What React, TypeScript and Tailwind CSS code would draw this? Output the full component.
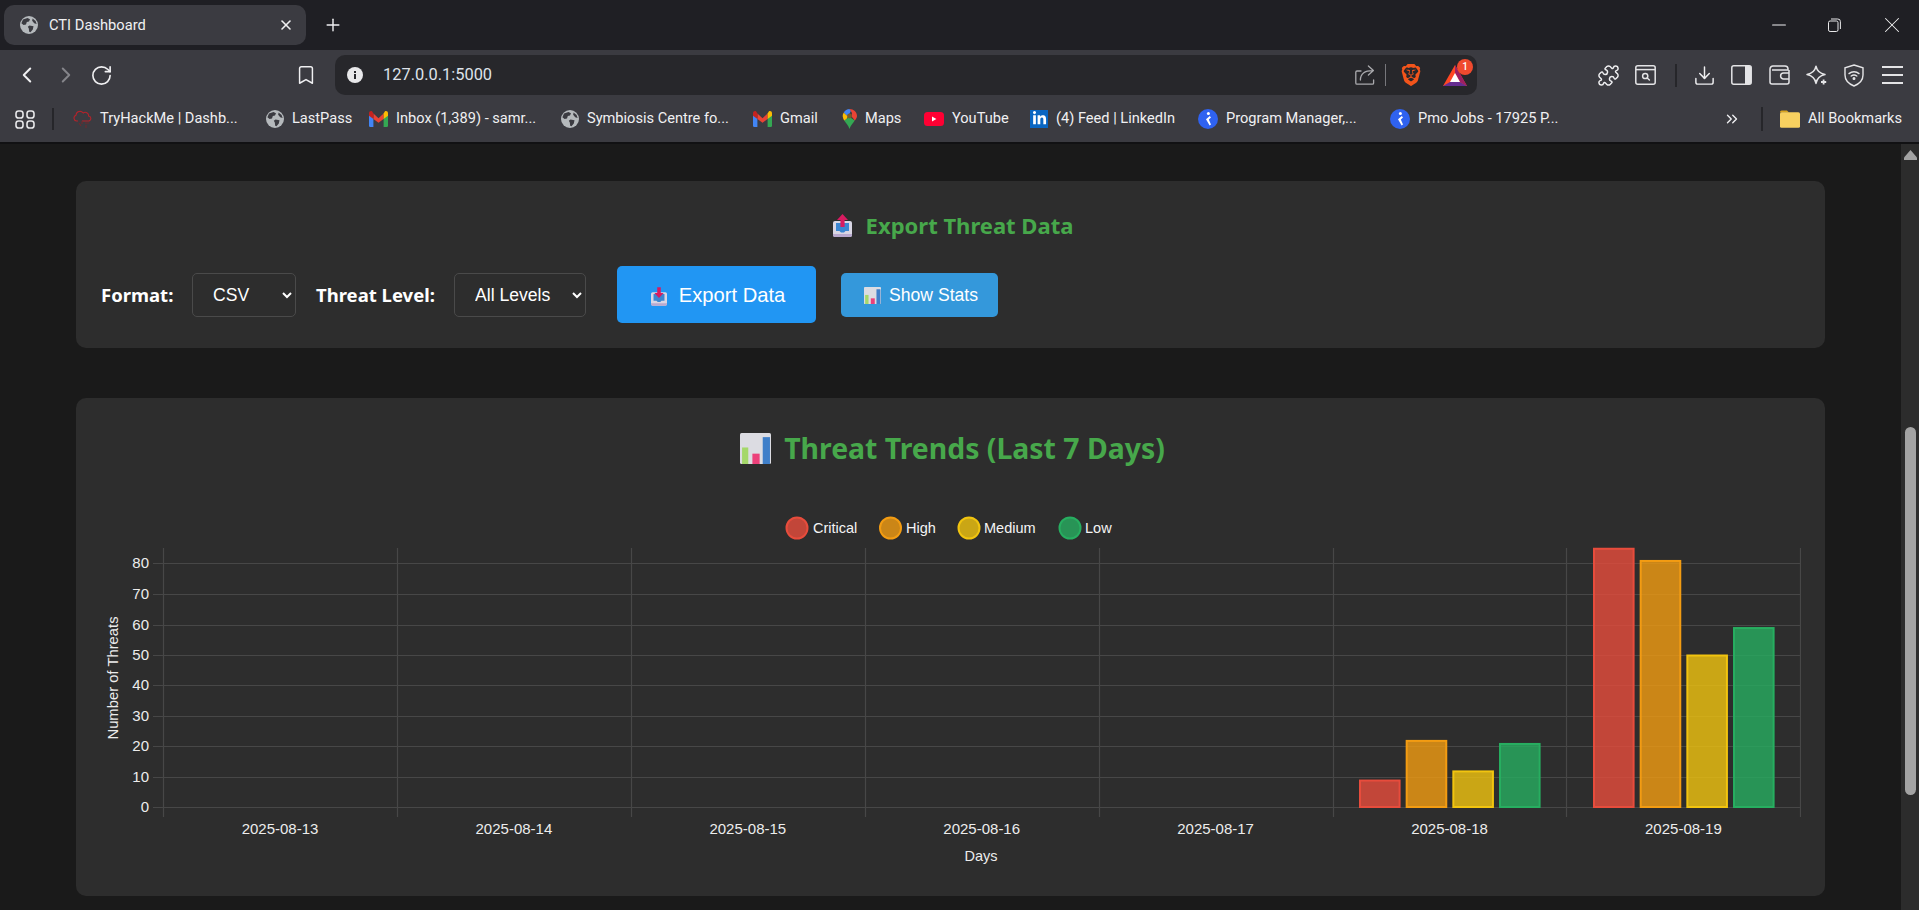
import React from 'react';
import {
  ChevronLeft,
  ChevronRight,
  ChevronsRight,
  Bookmark,
  Download,
  Minus,
  Plus,
  Puzzle,
  RotateCw,
  X,
} from 'lucide-react';
import { FaLinkedinIn } from 'react-icons/fa';
import { SiBrave } from 'react-icons/si';

function Globe({ size = 18 }: { size?: number }) {
  return (
    <svg width={size} height={size} viewBox="0 0 18 18">
      <circle cx="9" cy="9" r="9" fill="#b5b9bc" />
      <path d="M3 3.5 7.5 2 10 3.2 9 5.5 6.8 6 6 8.5 3.6 9 1.4 7.2Z" fill="#3b3b41" />
      <path d="M9.5 9.5 13.5 10.2 12.8 13.5 10.5 16.3 9.2 15.8 8.8 12.4 7.8 10.8Z" fill="#3b3b41" />
      <path d="M12.6 2.6 15.6 5 16.6 8 14.2 7.2 12.2 4.8Z" fill="#3b3b41" />
    </svg>
  );
}

function TryHackMe() {
  return (
    <svg width="19" height="20" viewBox="0 0 19 20" fill="none" stroke="#b3232b" strokeWidth="1.1">
      <path d="M5 12H3.6A3 3 0 0 1 3 6.2 4 4 0 0 1 10.2 4 3.4 3.4 0 0 1 15.6 7a2.6 2.6 0 0 1 .6 5H9" />
      <path d="M9 12v3M12 14h4M6 14l2 3M13 16v3" stroke="#6f2a2e" />
    </svg>
  );
}

function Gmail() {
  return (
    <svg width="19" height="16" viewBox="0 0 19 16">
      <path d="M0 2.2V14.6A1.3 1.3 0 0 0 1.3 16H4.4V7Z" fill="#4285f4" />
      <path d="M19 2.2V14.6A1.3 1.3 0 0 1 17.7 16H14.6V7Z" fill="#34a853" />
      <path d="M4.4 2.6 9.5 7.2 14.6 2.6V8L9.5 11.8 4.4 8Z" fill="#ea4335" />
      <path d="M0 2.2C0 .4 2 -.5 3.2 .6L4.4 2.6V8L0 4.8Z" fill="#c5221f" />
      <path d="M19 2.2C19 .4 17 -.5 15.8 .6L14.6 2.6V8L19 4.8Z" fill="#fbbc04" />
    </svg>
  );
}

function Maps() {
  return (
    <svg width="15" height="20" viewBox="0 0 15 20">
      <path d="M7.5 20C6.6 16.4 4.4 14.6 2.2 11.4L7.5 8 12.8 11.4C10.6 14.6 8.4 16.4 7.5 20Z" fill="#34a853" />
      <path d="M2.2 11.4C.3 8.6 .2 6 1.8 3.6L6 7.4 4.5 10Z" fill="#fbbc04" />
      <path d="M1.8 3.6C3 1.4 5 0 7.5 0L9 1.8 6 7.4Z" fill="#4285f4" />
      <path d="M7.5 0C11.7 0 15 3.2 15 7 15 8.6 14 10.2 12.8 11.4L9.6 7.6 10 4Z" fill="#ea4335" />
      <circle cx="7.5" cy="7" r="2.4" fill="#7b5a2a" />
    </svg>
  );
}

function YouTube() {
  return (
    <svg width="20" height="14" viewBox="0 0 20 14">
      <rect width="20" height="14" rx="3.5" fill="#ff0033" />
      <path d="M8 4.4 12.4 7 8 9.6Z" fill="#fff" />
    </svg>
  );
}

function LinkedIn() {
  return (
    <span className="flex h-[18px] w-[18px] items-center justify-center bg-[#0a66c2] text-white">
      <FaLinkedinIn size={15} />
    </span>
  );
}

function Naukri() {
  return (
    <svg width="20" height="20" viewBox="0 0 20 20">
      <circle cx="10" cy="10" r="10" fill="#2f62f0" />
      <circle cx="10.4" cy="4.6" r="1.5" fill="#fff" />
      <path d="M11.8 7 8 10.2 11.6 16.4 13 15.6 10.8 10.6 13 8.4Z" fill="#fff" />
    </svg>
  );
}

function Folder() {
  return (
    <svg width="20" height="18" viewBox="0 0 20 18">
      <path d="M0 2A1.6 1.6 0 0 1 1.6 .4H7L9 2.6H0Z" fill="#d9a520" />
      <rect y="2.2" width="20" height="15.6" rx="1.6" fill="#f7d060" />
    </svg>
  );
}

function AppsIcon() {
  return (
    <svg width="20" height="19" viewBox="0 0 20 19" fill="none" stroke="#e8e8ea" strokeWidth="1.6">
      <rect x="1" y="1" width="7" height="7" rx="2.6" />
      <rect x="12" y="1" width="7" height="7" rx="2.6" />
      <rect x="1" y="11" width="7" height="7" rx="2.6" />
      <rect x="12" y="11" width="7" height="7" rx="2.6" />
    </svg>
  );
}

function Restore() {
  return (
    <svg width="13" height="14" viewBox="0 0 13 14" fill="none" stroke="#e8e8ea" strokeWidth="1">
      <rect x=".5" y="3" width="9.5" height="10.5" rx="1.6" />
      <path d="M3 1h6.6A2.6 2.6 0 0 1 12.4 3.6V11" />
    </svg>
  );
}

function ShareIcon() {
  return (
    <svg width="20" height="20" viewBox="0 0 20 20" fill="none" stroke="#a9a9ad" strokeWidth="1.3" strokeLinecap="round" strokeLinejoin="round">
      <path d="M6 6H2A1.2 1.2 0 0 0 .8 7.2V18A1.2 1.2 0 0 0 2 19.2H17.4A1.2 1.2 0 0 0 18.6 18V15" />
      <path d="M5.4 15C5.4 8.6 9.4 5.6 18 5.6M13.4 1 18.4 5.6 13.4 10" />
    </svg>
  );
}

function BatIcon() {
  return (
    <span className="relative block h-[24px] w-[30px]">
      <svg width="24" height="22" viewBox="0 0 24 22" className="absolute bottom-0 left-0">
        <path d="M12 0 24 21H0Z" fill="#ff4724" />
        <path d="M12 0 24 21 17 17 12 8Z" fill="#9e1f63" />
        <path d="M0 21 7 17H17L24 21Z" fill="#662d91" />
        <path d="M12 8 17 17H7Z" fill="#fff" />
      </svg>
      <span className="absolute -top-[4px] right-0 flex h-[16px] w-[16px] items-center justify-center rounded-full bg-[#f04a2e] text-[10px] font-medium leading-none text-white">
        1
      </span>
    </span>
  );
}

function ReaderIcon() {
  return (
    <svg width="21" height="20" viewBox="0 0 21 20" fill="none" stroke="#e4e4e6" strokeWidth="1.5">
      <rect x=".8" y=".8" width="19.4" height="18.4" rx="2" />
      <path d="M1 4.6H20" />
      <circle cx="10.2" cy="11" r="2.6" />
      <path d="M12.2 13 14.4 15" strokeLinecap="round" />
    </svg>
  );
}

function SidebarIcon() {
  return (
    <svg width="21" height="20" viewBox="0 0 21 20">
      <rect x=".8" y=".8" width="19.4" height="18.4" rx="2" fill="none" stroke="#e4e4e6" strokeWidth="1.5" />
      <path d="M14 1H18.5A1.6 1.6 0 0 1 20 2.6V17.4A1.6 1.6 0 0 1 18.5 19H14Z" fill="#e4e4e6" />
    </svg>
  );
}

function WalletIcon() {
  return (
    <svg width="21" height="20" viewBox="0 0 21 20" fill="none" stroke="#e4e4e6" strokeWidth="1.5">
      <path d="M20 5V17A2 2 0 0 1 18 19H3A2 2 0 0 1 1 17V4A3 3 0 0 1 4 1H16A3 3 0 0 1 19 3.6V5H3" />
      <path d="M20 8H14.6A2.4 2.4 0 0 0 14.6 14H20" />
    </svg>
  );
}

function LeoIcon() {
  return (
    <svg width="22" height="21" viewBox="0 0 22 21" fill="none" stroke="#e4e4e6" strokeWidth="1.5" strokeLinejoin="round">
      <path d="M10 1.2C11 6 13.6 8.6 19 9.6 13.8 10.6 11 13.2 10 18.4 9 13.2 6.2 10.6 1 9.6 6.4 8.6 9 6 10 1.2Z" />
      <path d="M17.6 14.5V19.5M15 17H20.2" strokeWidth="1.8" />
    </svg>
  );
}

function ShieldWifi() {
  return (
    <svg width="20" height="23" viewBox="0 0 20 23" fill="none" stroke="#e4e4e6" strokeWidth="1.4" strokeLinecap="round">
      <path d="M10 1 19 3.8V11C19 16.4 15 20 10 22 5 20 1 16.4 1 11V3.8Z" />
      <path d="M5 9.6C7.8 7.2 12.2 7.2 15 9.6M7.2 12C8.8 10.8 11.2 10.8 12.8 12" />
      <circle cx="10" cy="14.6" r=".8" fill="#e4e4e6" />
    </svg>
  );
}

function MenuIcon() {
  return (
    <span className="flex w-[21px] flex-col gap-[6px]">
      <span className="h-[2px] bg-[#e4e4e6]" />
      <span className="h-[2px] bg-[#e4e4e6]" />
      <span className="h-[2px] bg-[#e4e4e6]" />
    </span>
  );
}

function InfoDot() {
  return (
    <svg width="16" height="16" viewBox="0 0 16 16">
      <circle cx="8" cy="8" r="8" fill="#e8e8ea" />
      <rect x="7" y="7" width="2" height="5" fill="#27272b" />
      <rect x="7" y="4" width="2" height="2" fill="#27272b" />
    </svg>
  );
}

function TrayEmoji({ down, width, height }: { down?: boolean; width: number; height: number }) {
  return (
    <svg width={width} height={height} viewBox="0 0 19 23" className="shrink-0">
      <path d="M2 7H17A2 2 0 0 1 19 9V21A2 2 0 0 1 17 23H2A2 2 0 0 1 0 21V9A2 2 0 0 1 2 7Z" fill="#d9d6e4" />
      <path d="M0 20H19V21A2 2 0 0 1 17 23H2A2 2 0 0 1 0 21Z" fill="#b9a9cf" />
      <path d="M3 9H16V17H12.5L11 18.6H8L6.5 17H3Z" fill="#3b86d1" />
      {down ? (
        <path d="M7.4 1H11.6V8H15L9.5 14 4 8H7.4Z" fill="#d81b60" />
      ) : (
        <path d="M9.5 0 15 6H11.6V13H7.4V6H4Z" fill="#d81b60" />
      )}
    </svg>
  );
}

function ChartEmoji({ size }: { size: number }) {
  return (
    <svg width={size} height={size} viewBox="0 0 30 30" className="shrink-0">
      <rect width="30" height="30" rx="1.5" fill="#dcdce2" />
      <rect x="2" y="14" width="6" height="16" fill="#a5d86a" />
      <rect x="12" y="20" width="7" height="10" fill="#ec407a" />
      <rect x="22" y="4" width="7" height="26" fill="#3f7fc9" />
    </svg>
  );
}

const bookmarks = [
  { label: 'TryHackMe | Dashb...', icon: <TryHackMe />, width: 193 },
  { label: 'LastPass', icon: <Globe />, width: 103 },
  { label: 'Inbox (1,389) - samr...', icon: <Gmail />, width: 192 },
  { label: 'Symbiosis Centre fo...', icon: <Globe />, width: 192 },
  { label: 'Gmail', icon: <Gmail />, width: 89 },
  { label: 'Maps', icon: <Maps />, width: 82 },
  { label: 'YouTube', icon: <YouTube />, width: 106 },
  { label: '(4) Feed | LinkedIn', icon: <LinkedIn />, width: 168 },
  { label: 'Program Manager,...', icon: <Naukri />, width: 192 },
  { label: 'Pmo Jobs - 17925 P...', icon: <Naukri />, width: 170 },
];

function BrowserChrome() {
  return (
    <div className="shrink-0 font-['Roboto',sans-serif] text-[#f0f0f2]">
      <div className="flex h-[50px] items-end bg-[#1f1f24] pb-[5px]">
        <div className="ml-[4px] flex h-[40px] w-[302px] items-center rounded-[10px] bg-[#3b3b41] pl-[16px]">
          <Globe />
          <span className="ml-[11px] text-[14.7px]">CTI Dashboard</span>
          <X size={16} strokeWidth={2.4} className="ml-[132px]" />
        </div>
        <Plus size={20} strokeWidth={1.7} className="mb-[10px] ml-[17px]" />
        <div className="mb-[11px] ml-auto flex h-[18px] items-center">
          <Minus size={22} strokeWidth={1.1} />
          <span className="ml-[38px]"><Restore /></span>
          <X size={26} strokeWidth={0.95} className="ml-[38px] mr-[14px]" />
        </div>
      </div>

      <div className="flex h-[45px] items-center bg-[#3b3b41] pt-[5px]">
        <ChevronLeft size={26} strokeWidth={1.8} className="ml-[14px]" />
        <ChevronRight size={26} strokeWidth={1.8} className="ml-[13px] text-[#85858a]" />
        <RotateCw size={23} strokeWidth={1.7} className="ml-[11px]" />
        <Bookmark size={22} strokeWidth={1.6} className="ml-[182px]" />
        <div className="ml-[18px] flex h-[40px] w-[1142px] items-center rounded-[10px] bg-[#27272b] pl-[12px]">
          <InfoDot />
          <span className="ml-[20px] text-[16.4px] text-[#dfe3ea]">127.0.0.1:5000</span>
          <span className="ml-[863px]"><ShareIcon /></span>
          <span className="ml-[10px] h-[22px] w-px bg-[#77777c]" />
          <span className="ml-[14px] text-[#f2541b]"><SiBrave size={22} /></span>
          <span className="ml-[21px]"><BatIcon /></span>
        </div>
        <span className="ml-[120px]"><Puzzle size={23} strokeWidth={1.5} /></span>
        <span className="ml-[15px]"><ReaderIcon /></span>
        <span className="ml-[19px] h-[23px] w-[2px] bg-[#26262a]" />
        <Download size={23} strokeWidth={1.5} className="ml-[16px]" />
        <span className="ml-[15px]"><SidebarIcon /></span>
        <span className="ml-[17px]"><WalletIcon /></span>
        <span className="ml-[16px]"><LeoIcon /></span>
        <span className="ml-[16px]"><ShieldWifi /></span>
        <span className="ml-[18px]"><MenuIcon /></span>
      </div>

      <div className="flex h-[49px] items-center border-b-2 border-[#111113] bg-[#3b3b41] pt-[1px] text-[14.6px]">
        <span className="ml-[15px]"><AppsIcon /></span>
        <span className="ml-[17px] h-[22px] w-[2px] bg-[#26262a]" />
        <div className="ml-[19px] flex">
          {bookmarks.map((item) => (
            <div key={item.label} className="flex items-center gap-[8px]" style={{ width: item.width }}>
              {item.icon}
              <span className="whitespace-nowrap">{item.label}</span>
            </div>
          ))}
        </div>
        <ChevronsRight size={18} strokeWidth={1.8} className="ml-[163px]" />
        <span className="ml-[20px] h-[24px] w-[2px] bg-[#26262a]" />
        <span className="ml-[17px]"><Folder /></span>
        <span className="ml-[8px] whitespace-nowrap">All Bookmarks</span>
      </div>
    </div>
  );
}

const yTicks = [
  { label: '80', y: 563 },
  { label: '70', y: 594 },
  { label: '60', y: 625 },
  { label: '50', y: 655 },
  { label: '40', y: 685 },
  { label: '30', y: 716 },
  { label: '20', y: 746 },
  { label: '10', y: 777 },
  { label: '0', y: 807 },
];

const days = ['2025-08-13', '2025-08-14', '2025-08-15', '2025-08-16', '2025-08-17', '2025-08-18', '2025-08-19'];

const levels = [
  { name: 'Critical', border: '#e74c3c', fill: 'rgba(231,76,60,0.8)', cx: 797, textX: 813 },
  { name: 'High', border: '#f39c12', fill: 'rgba(243,156,18,0.8)', cx: 890.5, textX: 906 },
  { name: 'Medium', border: '#f1c40f', fill: 'rgba(241,196,15,0.8)', cx: 969, textX: 984 },
  { name: 'Low', border: '#27ae60', fill: 'rgba(39,174,96,0.8)', cx: 1070, textX: 1085 },
];

const series = [
  { x: 1359, values: [9, 22, 12, 21] },
  { x: 1593, values: [85, 81, 50, 59] },
];

function ThreatChart() {
  return (
    <svg viewBox="101 510 1700 366" className="block h-[366px] w-[1700px] font-['Liberation_Sans',sans-serif]">
      {levels.map((level) => (
        <g key={level.name}>
          <circle cx={level.cx} cy="528" r="10.5" fill={level.fill} stroke={level.border} strokeWidth="2" />
          <text x={level.textX} y="533" fontSize="14.5" fill="#f4f4f4">{level.name}</text>
        </g>
      ))}

      {yTicks.map((tick) => (
        <g key={tick.label}>
          <line x1="153" x2="1800" y1={tick.y + 0.5} y2={tick.y + 0.5} stroke="#474747" strokeWidth="1.2" />
          <text x="149" y={tick.y + 5} fontSize="15" textAnchor="end" fill="#ececec">{tick.label}</text>
        </g>
      ))}
      {[0, 1, 2, 3, 4, 5, 6, 7].map((i) => (
        <line
          key={i}
          x1={163.5 + Math.round(i * 233.9)}
          x2={163.5 + Math.round(i * 233.9)}
          y1="548"
          y2="817"
          stroke="#474747"
          strokeWidth="1.2"
        />
      ))}

      {series.map((group) =>
        group.values.map((value, i) => {
          const level = levels[i];
          const top = 807 - value * 3.05;
          return (
            <rect
              key={`${group.x}-${level.name}`}
              x={group.x + i * 46.67 + 1}
              y={top + 1}
              width="39.6"
              height={807 - top - 1}
              fill={level.fill}
              stroke={level.border}
              strokeWidth="2"
            />
          );
        })
      )}

      {days.map((day, i) => (
        <text key={day} x={280 + i * 233.9} y="834" fontSize="15" textAnchor="middle" fill="#ececec">{day}</text>
      ))}
      <text x="981" y="861" fontSize="14.5" textAnchor="middle" fill="#ececec">Days</text>
      <text transform="translate(118 678) rotate(-90)" fontSize="14.8" textAnchor="middle" fill="#ececec">Number of Threats</text>
    </svg>
  );
}

function FilterSelect({ options, className }: { options: string[]; className: string }) {
  return (
    <select
      className={`h-[44px] rounded-[5px] border border-[#4a4a4a] bg-[#2d2d2d] pl-[16px] font-['Liberation_Sans',sans-serif] text-[17.6px] text-white ${className}`}
    >
      {options.map((option) => (
        <option key={option}>{option}</option>
      ))}
    </select>
  );
}

function ExportCard() {
  return (
    <div className="rounded-[10px] bg-[#2d2d2d] px-[25px] pb-[25px] pt-[30px]">
      <h3 className="flex h-[30px] items-center justify-center gap-[14px] pb-[2px] pl-[5px] text-[22px] font-bold text-[#47a84b]">
        <TrayEmoji width={19} height={23} />
        Export Threat Data
      </h3>
      <div className="mt-[25px] flex items-center font-['Liberation_Sans',sans-serif] text-white">
        <label className="w-[91px] font-['Noto_Sans',sans-serif] text-[18.5px] font-bold">Format:</label>
        <FilterSelect options={['CSV', 'JSON']} className="w-[104px]" />
        <label className="ml-[20px] w-[138px] font-['Noto_Sans',sans-serif] text-[18.5px] font-bold">Threat Level:</label>
        <FilterSelect options={['All Levels', 'Critical', 'High', 'Medium', 'Low']} className="w-[132px]" />
        <button className="ml-[31px] flex h-[57px] w-[199px] items-center justify-center gap-[12px] rounded-[5px] bg-[#2196f3] pl-[3px] pt-[2px] text-[20.2px]">
          <TrayEmoji down width={16} height={20} />
          Export Data
        </button>
        <button className="ml-[25px] flex h-[44px] w-[157px] items-center justify-center gap-[8px] rounded-[5px] bg-[#3498db] pl-[3px] pt-[2px] text-[17.6px]">
          <ChartEmoji size={17} />
          Show Stats
        </button>
      </div>
    </div>
  );
}

function TrendsCard() {
  return (
    <div className="mt-[50px] rounded-[10px] bg-[#2d2d2d] px-[25px] pb-[20px] pt-[25px]">
      <h2 className="flex h-[52px] items-center justify-center gap-[13px] pb-[2px] pl-[4px] text-[28.4px] font-bold text-[#47a84b]">
        <ChartEmoji size={31} />
        Threat Trends (Last 7 Days)
      </h2>
      <div className="mt-[35px]">
        <ThreatChart />
      </div>
    </div>
  );
}

function Scrollbar() {
  return (
    <div className="flex w-[18px] shrink-0 flex-col items-center bg-[#2c2c2c]">
      <svg width="13" height="10" viewBox="0 0 13 10" className="mt-[6px] shrink-0">
        <path d="M6.5 0 13 7.5V10H0V7.5Z" fill="#a3a3a3" />
      </svg>
      <div className="mt-[267px] h-[368px] w-[11px] shrink-0 rounded-full bg-[#a3a3a3]" />
    </div>
  );
}

export default function App() {
  return (
    <div className="flex h-[910px] w-full flex-col overflow-hidden bg-[#1a1a1a] font-['Noto_Sans',sans-serif]">
      <BrowserChrome />
      <div className="flex min-h-0 flex-1">
        <main className="min-w-0 flex-1 overflow-hidden px-[76px] pt-[37px]">
          <ExportCard />
          <TrendsCard />
        </main>
        <Scrollbar />
      </div>
    </div>
  );
}
